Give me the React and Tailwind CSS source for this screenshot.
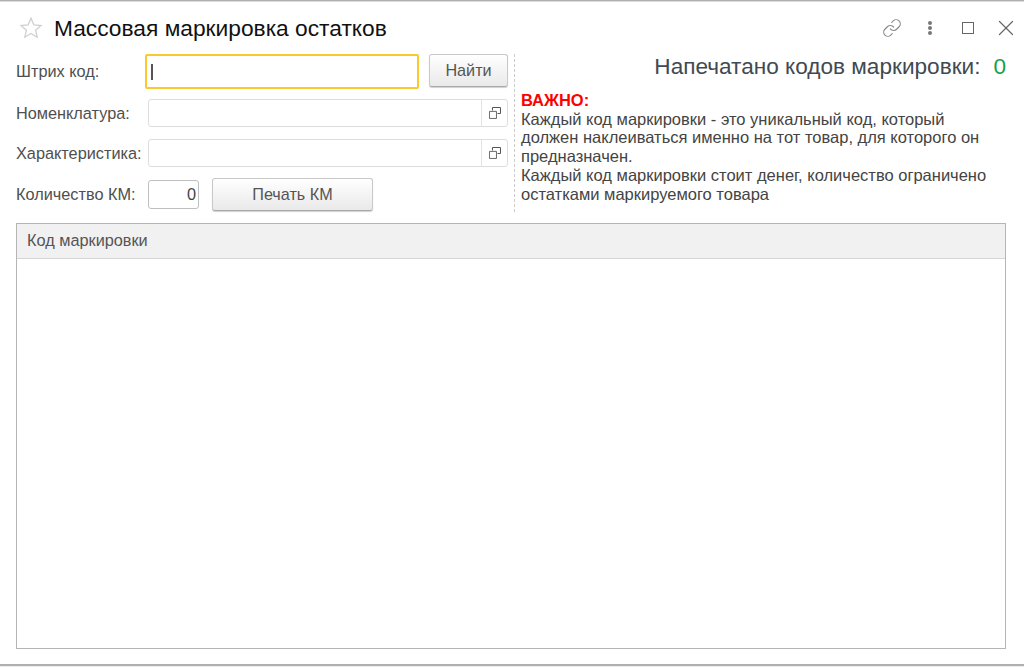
import { Link, X } from 'lucide-react';

function OpenIcon() {
  return (
    <svg width="12" height="12" viewBox="0 0 12 12" fill="none" stroke="#555" strokeWidth="1">
      <path d="M3.5 3.5V.5h8v6h-3" />
      <path d="M.5 3.5h8v8h-8z" transform="scale(.88) translate(0 1.5)" />
    </svg>
  );
}

function Star() {
  return (
    <svg width="24" height="24" viewBox="0 0 24 24" fill="none" stroke="#d0d0d0" strokeWidth="1.3">
      <path d="M12 2.2l2.9 6.6 7.1.7-5.4 4.7 1.6 7-6.2-3.7-6.2 3.7 1.6-7L2 9.5l7.1-.7z" />
    </svg>
  );
}

function PickField({ label }) {
  return (
    <div className="flex items-center h-[28px]">
      <span className="w-[132px] text-[16.3px] text-[#4f4f4f] whitespace-nowrap">{label}</span>
      <div className="w-[360px] h-[28px] flex border border-[#dddddd] rounded-[3px] bg-white">
        <div className="flex-1" />
        <div className="w-[26px] border-l border-[#e3e3e3] flex items-center justify-center">
          <OpenIcon />
        </div>
      </div>
    </div>
  );
}

function GrayButton({ children, className }) {
  return (
    <button className={`border border-[#c9c9c9] border-b-[#a9a9a9] rounded-[3px] bg-gradient-to-b from-white to-[#e9e9e9] text-[16.2px] text-[#555555] shadow-[0_1px_1px_#d0d0d0] ${className}`}>
      {children}
    </button>
  );
}

export default function App() {
  return (
    <div className="w-[1024px] h-[667px] flex flex-col bg-white overflow-hidden font-['Liberation_Sans',Arial,sans-serif]">
      <div className="h-[2px] bg-[#b0b0b0] border-b border-[#dcdcdc]" />

      {/* Title */}
      <div className="h-[52px] flex items-center pl-[19px] pr-[5px]">
        <Star />
        <h1 className="ml-[11px] text-[22.75px] text-[#111111] flex-1">Массовая маркировка остатков</h1>
        <Link className="w-[20px] h-[20px] text-[#8a8a8a] mr-[26px]" strokeWidth={1.4} />
        <div className="flex flex-col gap-[1px] mr-[30px]">
          <span className="w-[4px] h-[4px] rounded-full bg-[#777777]" />
          <span className="w-[4px] h-[4px] rounded-full bg-[#777777]" />
          <span className="w-[4px] h-[4px] rounded-full bg-[#777777]" />
        </div>
        <div className="w-[12px] h-[12px] border-[1.5px] border-[#666666] mr-[19px]" />
        <X className="w-[26px] h-[26px] text-[#666666]" strokeWidth={1.1} />
      </div>

      {/* Form */}
      <div className="flex pl-[16px] h-[158px]">
        <div className="w-[492px] flex flex-col">
          <div className="flex items-start h-[45px]">
            <span className="w-[129px] h-[35px] flex items-center text-[16.3px] text-[#4f4f4f]">Штрих код:</span>
            <div className="w-[274px] h-[35px] border-2 border-[#fcc82f] rounded-[2px] flex items-center pl-[4px]">
              <div className="w-[2px] h-[16px] bg-[#555555]" />
            </div>
            <GrayButton className="ml-[10px] w-[79px] h-[33px]">Найти</GrayButton>
          </div>
          <PickField label="Номенклатура:" />
          <div className="h-[12px]" />
          <PickField label="Характеристика:" />
          <div className="flex items-center h-[33px] mt-[11px]">
            <span className="w-[132px] text-[16.3px] text-[#4f4f4f] whitespace-nowrap">Количество КМ:</span>
            <div className="w-[51px] h-[29px] border border-[#bfbfbf] rounded-[3px] flex items-center justify-end pr-[2px] text-[16.3px] text-[#444444]">0</div>
            <GrayButton className="ml-[13px] w-[161px] h-[33px]">Печать КМ</GrayButton>
          </div>
        </div>

        <div className="ml-[6px] w-0 border-l border-dashed border-[#cccccc]" />

        <div className="flex-1 pl-[6px] pr-[18px]">
          <div className="flex justify-end items-center text-[22.6px] text-[#3f4a52] h-[28px] mt-[-1px] whitespace-nowrap">
            <span>Напечатано кодов маркировки:</span>
            <span className="ml-[13px] text-[#12a150]">0</span>
          </div>
          <div className="mt-[10px] text-[16.5px] leading-[18.7px] text-[#444444] whitespace-nowrap">
            <div className="font-bold text-[#ff0000]">ВАЖНО:</div>
            <div>Каждый код маркировки - это уникальный код, который</div>
            <div>должен наклеиваться именно на тот товар, для которого он</div>
            <div>предназначен.</div>
            <div>Каждый код маркировки стоит денег, количество ограничено</div>
            <div>остатками маркируемого товара</div>
          </div>
        </div>
      </div>

      {/* Table */}
      <div className="ml-[16px] mr-[18px] mt-[11px] h-[426px] border border-[#b5b5b5] flex flex-col">
        <div className="h-[35px] pb-[2px] bg-[#f1f1f1] border-b border-[#d6d6d6] flex items-center pl-[10px] text-[16.3px] text-[#555555]">
          Код маркировки
        </div>
        <div className="flex-1 bg-white" />
      </div>

      <div className="mt-[15px] h-[2px] bg-[#b0b0b0]" />
      <div className="flex-1 bg-[#eeeeee]" />
    </div>
  );
}
